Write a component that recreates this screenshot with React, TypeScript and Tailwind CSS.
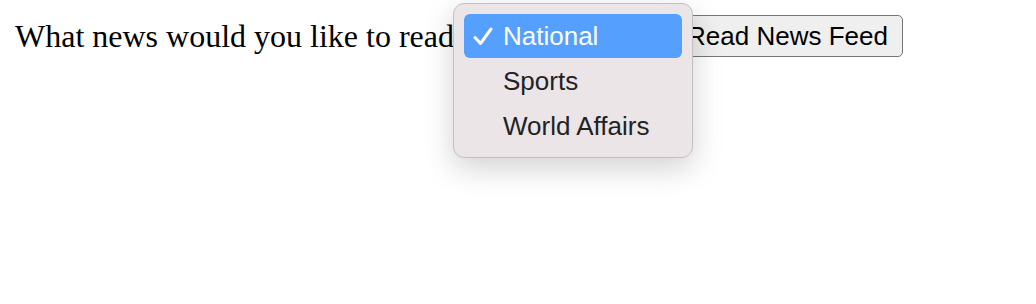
import React from 'react';

const options = ['National', 'Sports', 'World Affairs'];

function CheckIcon() {
  return (
    <svg width="20" height="19" viewBox="0 0 20 19" fill="none" className="shrink-0">
      <path d="M2 10.5 L7.5 16.5 L18 2" stroke="white" strokeWidth="3" strokeLinecap="round" strokeLinejoin="round" />
    </svg>
  );
}

export default function App() {
  const selected = 'National';

  return (
    <div className="relative h-[304px] w-[1036px] bg-white overflow-hidden">
      <div className="flex items-center pl-[15px] pt-[15px]">
        <span className="font-['Liberation_Serif',serif] text-[32px] leading-[42px] text-black whitespace-nowrap">
          What news would you like to read
        </span>

        {/* select, opened */}
        <div className="relative ml-[6px] h-[42px] w-[212px]">
          <div className="absolute left-[-7px] top-[-12px] flex w-[240px] flex-col gap-[1px] rounded-[11px] border border-[#c4bfc2] bg-[#ebe5e8] px-[10px] pt-[10px] pb-[9px] shadow-[0_10px_30px_rgba(0,0,0,0.18)] z-10">
            {options.map((opt) => {
              const active = opt === selected;
              return (
                <div
                  key={opt}
                  className={`flex h-[44px] items-center rounded-[6px] font-['Liberation_Sans',sans-serif] text-[26px] ${
                    active ? 'bg-[#559ffe] text-white' : 'text-[#222]'
                  }`}
                >
                  <span className="flex w-[39px] justify-end pr-[10px]">{active && <CheckIcon />}</span>
                  <span className="whitespace-nowrap">{opt}</span>
                </div>
              );
            })}
          </div>
        </div>

        <button className="h-[42px] w-[231px] rounded-[5px] border border-[#767676] bg-[#efefef] font-['Liberation_Sans',sans-serif] text-[26px] leading-none text-black">
          Read News Feed
        </button>
      </div>
    </div>
  );
}
